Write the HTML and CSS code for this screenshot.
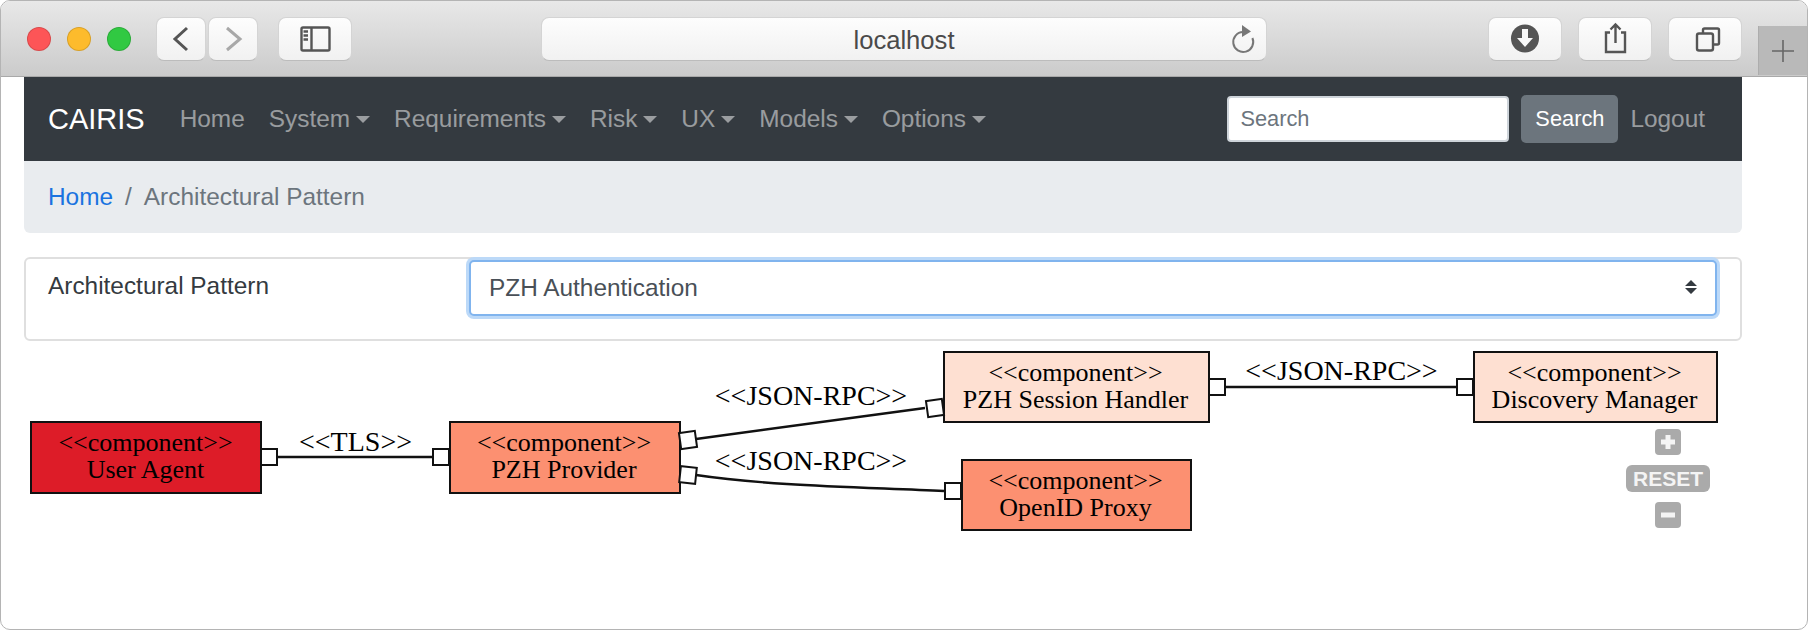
FILE: index.html
```html
<!DOCTYPE html>
<html lang="en">
<head>
<meta charset="utf-8">
<title>CAIRIS - Architectural Pattern</title>
<link rel="stylesheet" href="styles.css">
</head>
<body>
<div class="window">
  <header class="toolbar">
    <div class="lights">
      <span class="light light-red"></span>
      <span class="light light-amber"></span>
      <span class="light light-green"></span>
    </div>
    <div class="nav-buttons">
      <button class="tool tool-nav" type="button" aria-label="Back">
        <svg class="tool-icon" viewBox="0 0 50 44"><path class="icon-line" d="M31 11 L19 22 L31 33"/></svg>
      </button>
      <button class="tool tool-nav" type="button" aria-label="Forward">
        <svg class="tool-icon" viewBox="0 0 50 44"><path class="icon-line icon-muted" d="M19 11 L32 22 L19 33"/></svg>
      </button>
    </div>
    <button class="tool tool-wide tool-sidebar" type="button" aria-label="Sidebar">
      <svg class="tool-icon" viewBox="0 0 74 44">
        <rect class="icon-thin" x="23.5" y="10.5" width="28" height="23" rx="1.5"/>
        <path class="icon-thin" d="M33.5 10.5 V33.5"/>
        <path class="icon-thin" d="M25.5 14.5 H30 M25.5 18.5 H30 M25.5 22.5 H30"/>
      </svg>
    </button>
    <div class="address">
      <span></span>
      <span class="address-text">localhost</span>
      <svg class="reload" viewBox="0 0 30 34">
        <path class="reload-arc" d="M13 10 A10 10 0 1 0 22.4 16"/>
        <path class="reload-head" d="M12 3 L21 9.500 L12 15 Z"/>
      </svg>
    </div>
    <div class="actions">
      <button class="tool tool-wide" type="button" aria-label="Downloads">
        <svg class="tool-icon" viewBox="0 0 74 44">
          <circle class="icon-fill" cx="37" cy="21.5" r="14"/>
          <path class="icon-knock" d="M34 12 H40 V21 H45 L37 30 L29 21 H34 Z"/>
        </svg>
      </button>
      <button class="tool tool-wide" type="button" aria-label="Share">
        <svg class="tool-icon" viewBox="0 0 74 44">
          <path class="icon-thin" d="M32 15.5 H28 V35 H47 V15.5 H43"/>
          <path class="icon-thin" d="M37.5 8 V26 M32.5 12.5 L37.5 7.5 L42.5 12.5"/>
        </svg>
      </button>
      <button class="tool tool-wide" type="button" aria-label="Tabs">
        <svg class="tool-icon" viewBox="0 0 74 44">
          <rect class="icon-thin" x="29" y="16.5" width="16" height="17" rx="2"/>
          <path class="icon-thin" d="M35 16 V13 Q35 11.5 36.500 11.500 H49.500 Q51 11.500 51 13 V26 Q51 27.500 49.500 27.500 H46"/>
        </svg>
      </button>
    </div>
    <div class="new-tab">
      <svg class="new-tab-icon" viewBox="0 0 24 24"><path class="new-tab-line" d="M12 1 V23 M1 12 H23"/></svg>
    </div>
  </header>

  <main class="page">
    <nav class="navbar">
      <a class="brand" href="#">CAIRIS</a>
      <ul class="menu">
        <li class="menu-item"><a class="menu-link" href="#">Home</a></li>
        <li class="menu-item"><a class="menu-link has-caret" href="#">System</a></li>
        <li class="menu-item"><a class="menu-link has-caret" href="#">Requirements</a></li>
        <li class="menu-item"><a class="menu-link has-caret" href="#">Risk</a></li>
        <li class="menu-item"><a class="menu-link has-caret" href="#">UX</a></li>
        <li class="menu-item"><a class="menu-link has-caret" href="#">Models</a></li>
        <li class="menu-item"><a class="menu-link has-caret" href="#">Options</a></li>
      </ul>
      <form class="search">
        <input class="search-input" type="text" placeholder="Search">
        <button class="search-button" type="button">Search</button>
      </form>
      <a class="menu-link" href="#">Logout</a>
    </nav>

    <ol class="breadcrumb">
      <li class="crumb"><a class="crumb-link" href="#">Home</a></li>
      <li class="crumb crumb-sep" aria-hidden="true">/</li>
      <li class="crumb crumb-active">Architectural Pattern</li>
    </ol>

    <section class="card">
      <label class="card-label" for="pattern">Architectural Pattern</label>
      <div class="select-wrap">
        <select class="pattern-select" id="pattern">
          <option>PZH Authentication</option>
        </select>
        <svg class="select-arrows" viewBox="0 0 14 16"><path d="M7 1 L13 7 H1 Z M1 9 H13 L7 15 Z"/></svg>
      </div>
    </section>

    <svg class="diagram" viewBox="24 341 1718 200" role="img" aria-label="Architectural pattern diagram">
      <path class="wire" d="M278 457 H432"/>
      <path class="wire" d="M696 439 L925 408"/>
      <path class="wire" d="M696 475 C770 486 860 487 944 491"/>
      <path class="wire" d="M1226 387 H1457"/>

      <rect class="node node-red" x="31" y="422" width="230" height="71"/>
      <text class="node-text" x="145.500" y="451">&lt;&lt;component&gt;&gt;</text>
      <text class="node-text" x="145.500" y="478">User Agent</text>

      <rect class="node node-salmon" x="450" y="422" width="230" height="71"/>
      <text class="node-text" x="564" y="451">&lt;&lt;component&gt;&gt;</text>
      <text class="node-text" x="564" y="478">PZH Provider</text>

      <rect class="node node-pale" x="944" y="352" width="265" height="70"/>
      <text class="node-text" x="1075.500" y="381">&lt;&lt;component&gt;&gt;</text>
      <text class="node-text" x="1075.500" y="408">PZH Session Handler</text>

      <rect class="node node-pale" x="1474" y="352" width="243" height="70"/>
      <text class="node-text" x="1594.500" y="381">&lt;&lt;component&gt;&gt;</text>
      <text class="node-text" x="1594.500" y="408">Discovery Manager</text>

      <rect class="node node-salmon" x="962" y="460" width="229" height="70"/>
      <text class="node-text" x="1075.500" y="489">&lt;&lt;component&gt;&gt;</text>
      <text class="node-text" x="1075.500" y="516">OpenID Proxy</text>

      <rect class="port" x="261" y="449" width="16" height="16"/>
      <rect class="port" x="433" y="449" width="16" height="16"/>
      <rect class="port" x="927" y="400" width="16" height="16" transform="rotate(-8 935 408)"/>
      <rect class="port" x="680" y="432" width="16" height="16" transform="rotate(-8 688 440)"/>
      <rect class="port" x="680" y="467" width="16" height="16" transform="rotate(6 688 475)"/>
      <rect class="port" x="945" y="483" width="16" height="16"/>
      <rect class="port" x="1209" y="379" width="16" height="16"/>
      <rect class="port" x="1457" y="379" width="16" height="16"/>

      <text class="edge-text" x="355.500" y="451">&lt;&lt;TLS&gt;&gt;</text>
      <text class="edge-text" x="811" y="405">&lt;&lt;JSON-RPC&gt;&gt;</text>
      <text class="edge-text" x="811" y="470">&lt;&lt;JSON-RPC&gt;&gt;</text>
      <text class="edge-text" x="1341.500" y="380">&lt;&lt;JSON-RPC&gt;&gt;</text>

      <rect class="zoom-bg" x="1655" y="429" width="26" height="26" rx="4"/>
      <path class="zoom-mark" d="M1668 435 V449 M1661 442 H1675"/>
      <rect class="zoom-bg" x="1626" y="465" width="84" height="27" rx="6"/>
      <text class="zoom-text" x="1668" y="486">RESET</text>
      <rect class="zoom-bg" x="1655" y="502" width="26" height="26" rx="4"/>
      <path class="zoom-mark" d="M1661 515 H1675"/>
    </svg>
  </main>
</div>
</body>
</html>
```
FILE: styles.css
```css
* {
  box-sizing: border-box;
}

html,
body {
  margin: 0;
  padding: 0;
  background: #fff;
}

body {
  font-family: "Liberation Sans", Arial, sans-serif;
  font-size: 24.4px;
  color: #343a40;
}

.window {
  width: 1808px;
  height: 630px;
  border: 1px solid #b4b4b4;
  border-radius: 10px;
  overflow: hidden;
  background: #fff;
  display: flex;
  flex-direction: column;
}

.toolbar {
  flex: none;
  height: 76px;
  padding-top: 16px;
  padding-left: 26px;
  display: flex;
  align-items: flex-start;
  background: linear-gradient(#e8e8e8, #cbcbcb);
  border-bottom: 1px solid #a9a9a9;
}

.lights {
  display: flex;
  gap: 16px;
  margin-top: 10px;
}

.light {
  width: 24px;
  height: 24px;
  border-radius: 50%;
  border: 1px solid rgba(0, 0, 0, 0.14);
}

.light-red {
  background: #fd5557;
}

.light-amber {
  background: #fdbb2c;
}

.light-green {
  background: #31c942;
}

.nav-buttons {
  display: flex;
  gap: 2px;
  margin-left: 25px;
}

.tool {
  height: 44px;
  padding: 0;
  border: 1px solid #d4d4d4;
  border-bottom-color: #bcbcbc;
  border-radius: 8px;
  background: linear-gradient(#fdfdfd, #f1f1f1);
  display: block;
}

.tool-nav {
  width: 50px;
}

.tool-wide {
  width: 74px;
}

.tool-sidebar {
  margin-left: 20px;
}

.tool-icon {
  display: block;
  margin: -1px;
  width: calc(100% + 2px);
  height: calc(100% + 2px);
}

.icon-line {
  fill: none;
  stroke: #555;
  stroke-width: 3;
}

.icon-muted {
  stroke: #a8a8a8;
}

.icon-thin {
  fill: none;
  stroke: #555;
  stroke-width: 2.4;
}

.icon-fill {
  fill: #555;
}

.icon-knock {
  fill: #f8f8f8;
}

.address {
  width: 726px;
  height: 44px;
  margin-left: 189px;
  border: 1px solid #d4d4d4;
  border-bottom-color: #bcbcbc;
  border-radius: 8px;
  background: linear-gradient(#fdfdfd, #f1f1f1);
  display: grid;
  grid-template-columns: 1fr auto 1fr;
  align-items: center;
}

.address-text {
  font-size: 25.6px;
  line-height: 30px;
  padding-top: 2px;
  color: #4a4a4a;
}

.reload {
  justify-self: end;
  width: 30px;
  height: 34px;
  margin-right: 6px;
}

.reload-arc {
  fill: none;
  stroke: #777;
  stroke-width: 2;
}

.reload-head {
  fill: #777;
}

.actions {
  display: flex;
  gap: 16px;
  margin-left: 221px;
}

.new-tab {
  width: 49px;
  height: 49px;
  margin-top: 9px;
  margin-left: 16px;
  background: #b9b9b9;
  border-left: 1px solid #adadad;
  display: flex;
  align-items: center;
  justify-content: center;
}

.new-tab-icon {
  width: 24px;
  height: 24px;
}

.new-tab-line {
  fill: none;
  stroke: #666;
  stroke-width: 1.6;
}

.page {
  flex: 1;
  width: 1718px;
  margin-left: 23px;
}

.navbar {
  height: 84px;
  padding: 0 25px 0 24px;
  background: #343a40;
  display: flex;
  align-items: center;
}

.brand {
  font-size: 29px;
  color: #fff;
  text-decoration: none;
  margin-right: 23px;
}

.menu {
  list-style: none;
  margin: 0;
  padding: 0;
  display: flex;
}

.menu-link {
  display: block;
  padding: 0 12px;
  color: rgba(255, 255, 255, 0.5);
  text-decoration: none;
  white-space: nowrap;
}

.has-caret::after {
  content: "";
  display: inline-block;
  margin-left: 6px;
  vertical-align: 4px;
  border-top: 7px solid;
  border-left: 7px solid transparent;
  border-right: 7px solid transparent;
}

.search {
  margin-left: auto;
  display: flex;
  align-items: center;
  gap: 12px;
}

.search-input {
  width: 282px;
  height: 46px;
  padding: 0 11px;
  border: 2px solid #ced4da;
  border-radius: 4px;
  background: #fff;
  font: 21.8px "Liberation Sans", Arial, sans-serif;
  color: #495057;
}

.search-input::placeholder {
  color: #6c757d;
  opacity: 1;
}

.search-button {
  width: 97px;
  height: 48px;
  padding: 0;
  border: 0;
  border-radius: 5px;
  background: #6c757d;
  color: #fff;
  font: 21.8px "Liberation Sans", Arial, sans-serif;
}

.breadcrumb {
  list-style: none;
  height: 72px;
  margin: 0 0 24px;
  padding: 0 24px;
  background: #e9ecef;
  border-radius: 0 0 6px 6px;
  display: flex;
  align-items: center;
}

.crumb-link {
  color: #1a73e0;
  text-decoration: none;
}

.crumb-sep {
  padding: 0 12px;
  color: #6c757d;
}

.crumb-active {
  color: #6c757d;
}

.card {
  height: 84px;
  padding: 1px 23px 0 22px;
  border: 2px solid #dfdfdf;
  border-radius: 6px;
  display: flex;
  align-items: flex-start;
}

.card-label {
  flex: none;
  width: 421px;
  line-height: 36px;
  margin-top: 8px;
  color: #343a40;
}

.select-wrap {
  position: relative;
  flex: 1;
}

.pattern-select {
  display: block;
  width: 100%;
  height: 56px;
  padding: 0 18px 2px;
  border: 2px solid #80b4ee;
  border-radius: 5px;
  outline: none;
  box-shadow: 0 0 0 3px #bcd9f8;
  background: #fff;
  color: #495057;
  font: 24.4px "Liberation Sans", Arial, sans-serif;
  appearance: none;
}

.select-arrows {
  position: absolute;
  right: 19px;
  top: 19px;
  width: 14px;
  height: 16px;
  fill: #343a40;
  pointer-events: none;
}

.diagram {
  display: block;
  width: 1718px;
  height: 200px;
}

.node {
  stroke: #111;
  stroke-width: 2;
}

.node-red {
  fill: #dd1c28;
}

.node-salmon {
  fill: #fc9071;
}

.node-pale {
  fill: #fee0d2;
}

.node-text,
.edge-text {
  font-family: "Liberation Serif", "Times New Roman", serif;
  text-anchor: middle;
  fill: #000;
}

.node-text {
  font-size: 26px;
}

.edge-text {
  font-size: 28px;
}

.wire {
  fill: none;
  stroke: #111;
  stroke-width: 2.4;
}

.port {
  fill: #fff;
  stroke: #111;
  stroke-width: 2;
}

.zoom-bg {
  fill: #aaa;
}

.zoom-mark {
  fill: none;
  stroke: #f4f4f4;
  stroke-width: 5;
}

.zoom-text {
  font-family: "Liberation Sans", Arial, sans-serif;
  font-size: 21px;
  font-weight: 700;
  text-anchor: middle;
  fill: #f4f4f4;
}
```
